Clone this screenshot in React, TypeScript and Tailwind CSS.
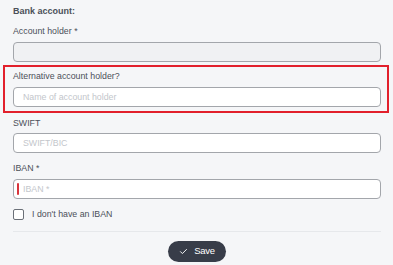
import React from "react";

function Label({ children, className = "" }: { children: React.ReactNode; className?: string }) {
  return <div className={`text-[8.8px] leading-[12px] text-[#4b5058] ${className}`}>{children}</div>;
}

function Input({ placeholder, disabled, bar }: { placeholder?: string; disabled?: boolean; bar?: boolean }) {
  return (
    <div
      className={`relative h-[20px] w-full rounded-[4px] border border-[#a3a6ab] flex items-center pl-[9px] ${
        disabled ? "bg-[#f0f1f3]" : "bg-white"
      }`}
    >
      {bar && <span className="absolute left-[3px] top-[3px] h-[12px] w-[2px] rounded-[1px] bg-[#d8343c]" />}
      {placeholder && <span className="text-[8.8px] leading-[12px] text-[#c3c6cb]">{placeholder}</span>}
    </div>
  );
}

export default function App() {
  return (
    <div className="w-[393px] h-[265px] overflow-hidden bg-[#f5f6f8] px-[13px] pt-[5px] font-['Liberation_Sans',Arial,sans-serif]">
      <div className="w-[368px]">
        <div className="text-[9px] leading-[12px] font-bold text-[#4b5058]">Bank account:</div>
        <Label className="mt-[8px]">Account holder *</Label>
        <div className="mt-[5px]">
          <Input disabled />
        </div>
        <div className="mt-[3px] -ml-[10px] -mr-[8px] border-2 border-[#e2202c] pl-[8px] pr-[6px] pt-[3px] pb-[4px]">
          <Label>Alternative account holder?</Label>
          <div className="mt-[5px]">
            <Input placeholder="Name of account holder" />
          </div>
        </div>
        <Label className="mt-[4px]">SWIFT</Label>
        <div className="mt-[4px]">
          <Input placeholder="SWIFT/BIC" />
        </div>
        <Label className="mt-[9px]">IBAN *</Label>
        <div className="mt-[5px]">
          <Input placeholder="IBAN *" bar />
        </div>
        <div className="mt-[9px] flex items-center gap-[8px]">
          <span className="h-[11px] w-[11px] rounded-[2px] border border-[#6b7078] bg-white" />
          <span className="text-[8.8px] leading-[12px] text-[#4b5058]">I don't have an IBAN</span>
        </div>
        <div className="mt-[11px] h-px bg-[#e6e8eb]" />
        <div className="mt-[9px] flex justify-center">
          <button className="h-[21px] w-[58px] rounded-full bg-[#383d49] flex items-center justify-center gap-[6px] text-white text-[9.5px]">
            <svg width="9" height="9" viewBox="0 0 24 24" fill="none" stroke="white" strokeWidth="2.5" strokeLinecap="round" strokeLinejoin="round">
              <path d="M4 12.5l5 5L20 6.5" />
            </svg>
            <span className="tracking-[-0.3px]">Save</span>
          </button>
        </div>
      </div>
    </div>
  );
}
